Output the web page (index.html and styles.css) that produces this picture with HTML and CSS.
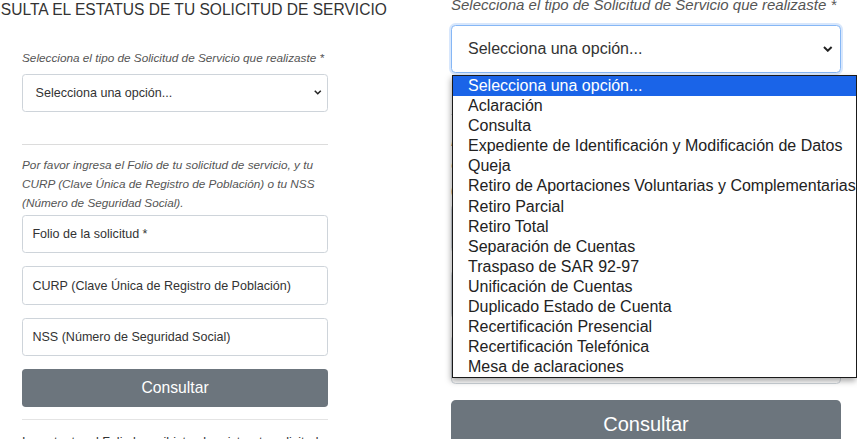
FILE: index.html
```html
<!DOCTYPE html>
<html lang="es">
<head>
  <meta charset="UTF-8">
  <meta name="viewport" content="width=device-width, initial-scale=1.0">
  <title>Consulta el estatus de tu solicitud de servicio</title>
  <link rel="stylesheet" href="styles.css">
</head>
<body>
  <div class="page">
    <!-- vista normal del formulario -->
    <section class="panel panel-small">
      <h2 class="title">CONSULTA EL ESTATUS DE TU SOLICITUD DE SERVICIO</h2>
      <div class="form">
        <label class="label">Selecciona el tipo de Solicitud de Servicio que realizaste *</label>
        <div class="select">
          <span>Selecciona una opción...</span>
          <svg class="chevron" viewBox="0 0 10 6"><path d="M1 1l4 4 4-4"/></svg>
        </div>
        <hr class="rule rule-top">
        <p class="hint">Por favor ingresa el Folio de tu solicitud de servicio, y tu CURP (Clave Única de Registro de Población) o tu NSS (Número de Seguridad Social).</p>
        <div class="field">Folio de la solicitud *</div>
        <div class="field">CURP (Clave Única de Registro de Población)</div>
        <div class="field">NSS (Número de Seguridad Social)</div>
        <button class="btn" type="button">Consultar</button>
        <hr class="rule rule-bottom">
        <p class="note">Importante: el Folio lo recibiste al registrar tu solicitud.</p>
      </div>
    </section>

    <!-- vista ampliada con la lista desplegada -->
    <section class="panel panel-large">
      <h2 class="title">CONSULTA EL ESTATUS DE TU SOLICITUD DE SERVICIO</h2>
      <div class="form">
        <label class="label">Selecciona el tipo de Solicitud de Servicio que realizaste *</label>
        <div class="select-wrap">
          <div class="select select-focus">
            <span>Selecciona una opción...</span>
            <svg class="chevron" viewBox="0 0 10 6"><path d="M1 1l4 4 4-4"/></svg>
          </div>
          <ul class="options">
            <li class="active">Selecciona una opción...</li>
            <li>Aclaración</li>
            <li>Consulta</li>
            <li>Expediente de Identificación y Modificación de Datos</li>
            <li>Queja</li>
            <li>Retiro de Aportaciones Voluntarias y Complementarias</li>
            <li>Retiro Parcial</li>
            <li>Retiro Total</li>
            <li>Separación de Cuentas</li>
            <li>Traspaso de SAR 92-97</li>
            <li>Unificación de Cuentas</li>
            <li>Duplicado Estado de Cuenta</li>
            <li>Recertificación Presencial</li>
            <li>Recertificación Telefónica</li>
            <li>Mesa de aclaraciones</li>
          </ul>
        </div>
        <hr class="rule rule-top">
        <p class="hint">Por favor ingresa el Folio de tu solicitud de servicio, y tu CURP (Clave Única de Registro de Población) o tu NSS (Número de Seguridad Social).</p>
        <div class="field">Folio de la solicitud *</div>
        <div class="field">CURP (Clave Única de Registro de Población)</div>
        <div class="field">NSS (Número de Seguridad Social)</div>
        <button class="btn" type="button">Consultar</button>
        <hr class="rule rule-bottom">
        <p class="note">Importante: el Folio lo recibiste al registrar tu solicitud.</p>
      </div>
    </section>
  </div>
</body>
</html>
```

FILE: styles.css
```css
body {
  margin: 0;
  overflow: hidden;
  background: #fff;
  font-family: "Liberation Sans", Arial, sans-serif;
  color: #333;
}

.page {
  display: flex;
  align-items: flex-start;
}

.panel {
  flex: none;
  box-sizing: border-box;
}

.panel-small {
  width: 430px;
  font-size: 12.56px;
  padding: 1px 0 0 22px;
}

.panel-large {
  font-size: 16px;
  padding: 1px 0 0 21px;
  margin-top: -69px;
}

.title {
  font-size: 1.24em;
  font-weight: normal;
  line-height: 1.2;
  white-space: nowrap;
  color: #333;
  margin: 0 0 1.9em -3.58em;
}

.form {
  width: 24.375em;
}

.label {
  display: block;
  font-size: 0.9375em;
  font-style: italic;
  line-height: 1.5;
  color: #555;
  margin-bottom: 0.57em;
  white-space: nowrap;
}

.select-wrap {
  position: relative;
}

.select,
.field {
  display: flex;
  align-items: center;
  box-sizing: border-box;
  border: 1px solid #ced4da;
  border-radius: 0.28em;
  background: #fff;
  color: #333;
}

.select {
  height: 3.03em;
  padding: 0 0.45em 0 1em;
  justify-content: space-between;
}

.select-focus {
  border-color: #86b7f5;
  box-shadow: 0 0 0 2px rgba(40, 120, 240, 0.18);
}

.chevron {
  width: 0.6em;
  height: 0.36em;
  fill: none;
  stroke: #222;
  stroke-width: 2;
}

.rule {
  border: none;
  height: 1px;
  margin: 0;
}

.rule-top {
  background: #dcdcdc;
  margin-top: 2.55em;
}

.rule-bottom {
  background: #e4e4e4;
  margin-top: 1em;
}

.hint {
  font-size: 0.9375em;
  font-style: italic;
  line-height: 1.6;
  color: #555;
  margin: 0.95em 0 0.2em;
}

.field {
  height: 3.07em;
  padding: 0 0.75em;
}

.field + .field {
  margin-top: 1.035em;
}

.btn {
  display: block;
  width: 100%;
  height: 2.424em;
  margin-top: 0.796em;
  border: none;
  border-radius: 0.24em;
  background: #6c757d;
  color: #fff;
  font-family: inherit;
  font-size: 1.25em;
  cursor: pointer;
}

.note {
  margin: 1.15em 0 0;
  font-size: 1em;
  color: #333;
}

/* lista nativa desplegada */
.options {
  position: absolute;
  top: calc(100% + 2px);
  left: 1px;
  width: 405px;
  margin: 0;
  padding: 0;
  list-style: none;
  box-sizing: border-box;
  overflow: hidden;
  background: #fff;
  border: 1px solid #1a1a1a;
  box-shadow: -1px 3px 6px rgba(0, 0, 0, 0.35);
  font-size: 16px;
  line-height: 20.1px;
  color: #222;
  z-index: 2;
}

.options li {
  padding-left: 15px;
  white-space: nowrap;
}

.options .active {
  background: #1a64e8;
  color: #fff;
}
```
